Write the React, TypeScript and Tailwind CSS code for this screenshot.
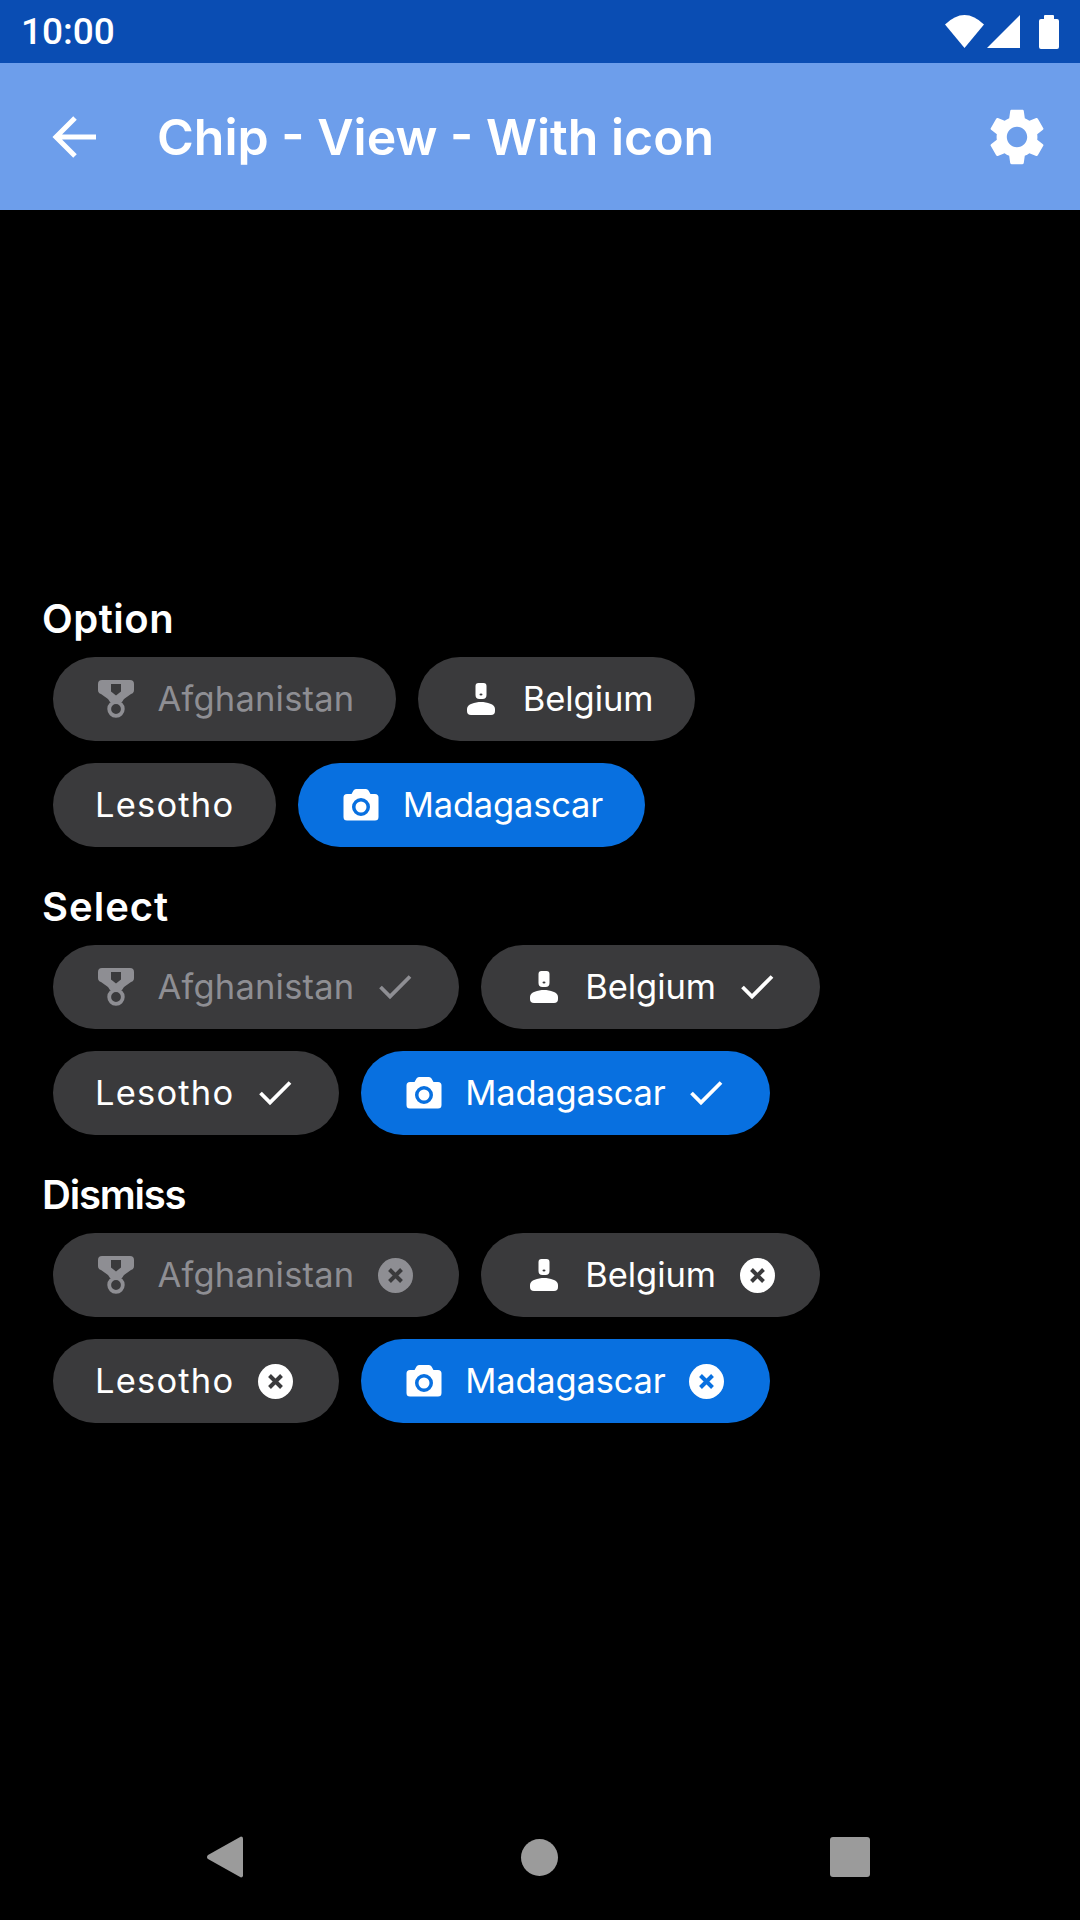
import type { ReactNode } from "react";

type Trailing = "none" | "check" | "close";
type ChipData = {
  label: string;
  icon?: "medal" | "person" | "camera";
  disabled?: boolean;
  active?: boolean;
  tracking: string;
};

const ROW_ONE: ChipData[] = [
  { label: "Afghanistan", icon: "medal", disabled: true, tracking: "tracking-[0.2px]" },
  { label: "Belgium", icon: "person", tracking: "tracking-[-0.1px]" },
];
const ROW_TWO: ChipData[] = [
  { label: "Lesotho", tracking: "tracking-[1.2px]" },
  { label: "Madagascar", icon: "camera", active: true, tracking: "tracking-[-0.2px]" },
];

function LeadIcon({ name }: { name: NonNullable<ChipData["icon"]> }) {
  if (name === "medal") {
    return (
      <svg width="36" height="38" viewBox="0 0 36 38" fill="currentColor">
        <path fillRule="evenodd" d="M4 0h28a4 4 0 0 1 4 4v6q0 3-3 4l-7 5-2 3H12l-2-3-7-5q-3-1-3-4V4a4 4 0 0 1 4-4zm9 4v7.500l5 4 5-4V4z" />
        <circle cx="18" cy="29" r="6.800" fill="none" stroke="currentColor" strokeWidth="3.800" />
      </svg>
    );
  }
  if (name === "person") {
    return (
      <svg width="28" height="32" viewBox="0 0 28 32" fill="currentColor">
        <path fillRule="evenodd" d="M11.500 0h5a3 3 0 0 1 3 3v9a4 4 0 0 1-4 4h-3a4 4 0 0 1-4-4V3a3 3 0 0 1 3-3zm2.500 10.500a1.500 1 0 1 0 0 2 1.500 1 0 0 0 0-2z" />
        <path d="M0 26C0 21 8 19 14 19s14 2 14 7v2a4 4 0 0 1-4 4H4a4 4 0 0 1-4-4z" />
      </svg>
    );
  }
  return (
    <svg width="36" height="32" viewBox="0 0 36 32" fill="currentColor">
      <path fillRule="evenodd" d="M13 0h10a3 3 0 0 1 2.500 1.500L27.500 5H32a3.500 3.500 0 0 1 3.500 3.500V28a3.500 3.500 0 0 1-3.500 3.500H4A3.500 3.500 0 0 1 .5 28V8.500A3.500 3.500 0 0 1 4 5h4.500l2-3.500A3 3 0 0 1 13 0zm5 9a9 9 0 1 0 0 18 9 9 0 0 0 0-18zm0 3.500a5.500 5.500 0 1 1 0 11 5.500 5.500 0 0 1 0-11z" />
    </svg>
  );
}

function TrailIcon({ kind, active, disabled }: { kind: Trailing; active?: boolean; disabled?: boolean }) {
  if (kind === "check") {
    return (
      <svg width="35" height="35" viewBox="0 0 35 35" fill="none" stroke="currentColor" strokeWidth="3.800">
        <path d="M2.500 17l9.500 9.500L32 6.500" />
      </svg>
    );
  }
  const cross = active ? "#0870e0" : "#3a3a3c";
  return (
    <svg width="35" height="35" viewBox="0 0 35 35">
      <circle cx="17.500" cy="17.500" r="17.500" fill={disabled ? "#8e8e93" : "#ffffff"} />
      <path d="M11.500 11.500l12 12M23.500 11.500l-12 12" stroke={cross} strokeWidth="4" />
    </svg>
  );
}

function Chip({ chip, trailing }: { chip: ChipData; trailing: Trailing }) {
  const tone = chip.active ? "bg-[#0870e0] text-white" : chip.disabled ? "bg-[#3a3a3c] text-[#8e8e93]" : "bg-[#3a3a3c] text-white";
  return (
    <div
      className={`flex h-[84px] items-center rounded-full ${chip.icon ? "pl-[45px]" : "pl-[42px]"} ${
        trailing === "none" ? "pr-[42px]" : "pr-[45.500px]"
      } ${tone}`}
    >
      {chip.icon && (
        <div className="mr-[23.500px] flex w-[36px] justify-center">
          <LeadIcon name={chip.icon} />
        </div>
      )}
      <span className={`text-[34.500px] leading-none ${chip.tracking}`}>{chip.label}</span>
      {trailing !== "none" && (
        <div className="ml-[24px] flex">
          <TrailIcon kind={trailing} active={chip.active} disabled={chip.disabled} />
        </div>
      )}
    </div>
  );
}

function Section({ title, tracking, trailing }: { title: string; tracking: string; trailing: Trailing }) {
  return (
    <section className="flex flex-col">
      <h2 className={`ml-[42px] h-[76px] pt-[15px] text-[40px] leading-[46px] font-semibold text-white ${tracking}`}>{title}</h2>
      <div className="ml-[53px] flex flex-col gap-[22px]">
        <div className="flex gap-[22px]">
          {ROW_ONE.map((c) => (
            <Chip key={c.label} chip={c} trailing={trailing} />
          ))}
        </div>
        <div className="flex gap-[22px]">
          {ROW_TWO.map((c) => (
            <Chip key={c.label} chip={c} trailing={trailing} />
          ))}
        </div>
      </div>
    </section>
  );
}

function StatusBar(): ReactNode {
  return (
    <div className="flex h-[63px] items-center justify-between bg-[#0a4db3] pl-[21px] pr-[20px] text-white">
      <span className="font-['Roboto',sans-serif] text-[37px] leading-none font-medium">10:00</span>
      <svg width="115" height="34" viewBox="0 0 115 34" fill="#fff">
        <path d="M0 9.500Q19.500-9.500 39 9.500L19.500 33z" />
        <path d="M75 0v33H42z" />
        <path d="M99 4V1a1 1 0 0 1 1-1h8a1 1 0 0 1 1 1v3h3a2 2 0 0 1 2 2v26a2 2 0 0 1-2 2H96a2 2 0 0 1-2-2V6a2 2 0 0 1 2-2z" />
      </svg>
    </div>
  );
}

function AppBar() {
  return (
    <header className="flex h-[147px] items-center bg-[#6d9eeb] text-white">
      <svg className="ml-[50px]" width="48" height="48" viewBox="0 0 48 48" fill="none" stroke="#fff" strokeWidth="5">
        <path d="M46 24H8M25 5L6 24l19 19" />
      </svg>
      <h1 className="ml-[59px] text-[50px] leading-none font-semibold">Chip - View - With icon</h1>
      <svg className="ml-auto mr-[29px]" width="68" height="68" viewBox="0 0 24 24" fill="#fff">
        <path d="M19.140 12.940c.04-.3.06-.61.06-.94 0-.32-.02-.64-.07-.94l2.030-1.580c.18-.14.23-.41.12-.61l-1.920-3.320c-.12-.22-.37-.29-.59-.22l-2.390.96c-.5-.38-1.030-.7-1.620-.94l-.36-2.540c-.04-.24-.24-.41-.48-.41h-3.840c-.24 0-.43.17-.47.41l-.36 2.540c-.59.24-1.130.57-1.620.94l-2.390-.96c-.22-.08-.47 0-.59.22L2.740 8.870c-.12.21-.08.47.12.61l2.030 1.580c-.05.3-.09.63-.09.94s.02.64.07.94l-2.030 1.580c-.18.14-.23.41-.12.61l1.920 3.320c.12.22.37.29.59.22l2.390-.96c.5.38 1.030.7 1.620.94l.36 2.540c.05.24.24.41.48.41h3.840c.24 0 .44-.17.47-.41l.36-2.540c.59-.24 1.130-.56 1.620-.94l2.390.96c.22.08.47 0 .59-.22l1.920-3.320c.12-.22.07-.47-.12-.61l-2.010-1.580zM12 15.600c-1.980 0-3.600-1.620-3.600-3.600s1.620-3.600 3.600-3.600 3.600 1.620 3.600 3.600-1.620 3.600-3.600 3.600z" />
      </svg>
    </header>
  );
}

function NavBar() {
  return (
    <nav className="flex h-[126px] items-center justify-between bg-black pl-[207px] pr-[210px]">
      <svg width="36" height="42" viewBox="0 0 36 42" fill="#9b9b9b">
        <path d="M34 0.500a2 2 0 0 1 2 2v37a2 2 0 0 1-2 2L1 23a2.500 2.500 0 0 1 0-4z" />
      </svg>
      <div className="ml-[6px] h-[37px] w-[37px] rounded-full bg-[#9b9b9b]" />
      <div className="h-[40px] w-[40px] rounded-[3px] bg-[#9b9b9b]" />
    </nav>
  );
}

export default function App() {
  return (
    <div className="flex h-[1920px] w-[1080px] flex-col bg-black font-['Inter',sans-serif]">
      <StatusBar />
      <AppBar />
      <main className="flex flex-1 flex-col gap-[22px] pt-[371px]">
        <Section title="Option" tracking="tracking-[0.5px]" trailing="none" />
        <Section title="Select" tracking="tracking-[1px]" trailing="check" />
        <Section title="Dismiss" tracking="tracking-[-1.2px]" trailing="close" />
      </main>
      <NavBar />
    </div>
  );
}
